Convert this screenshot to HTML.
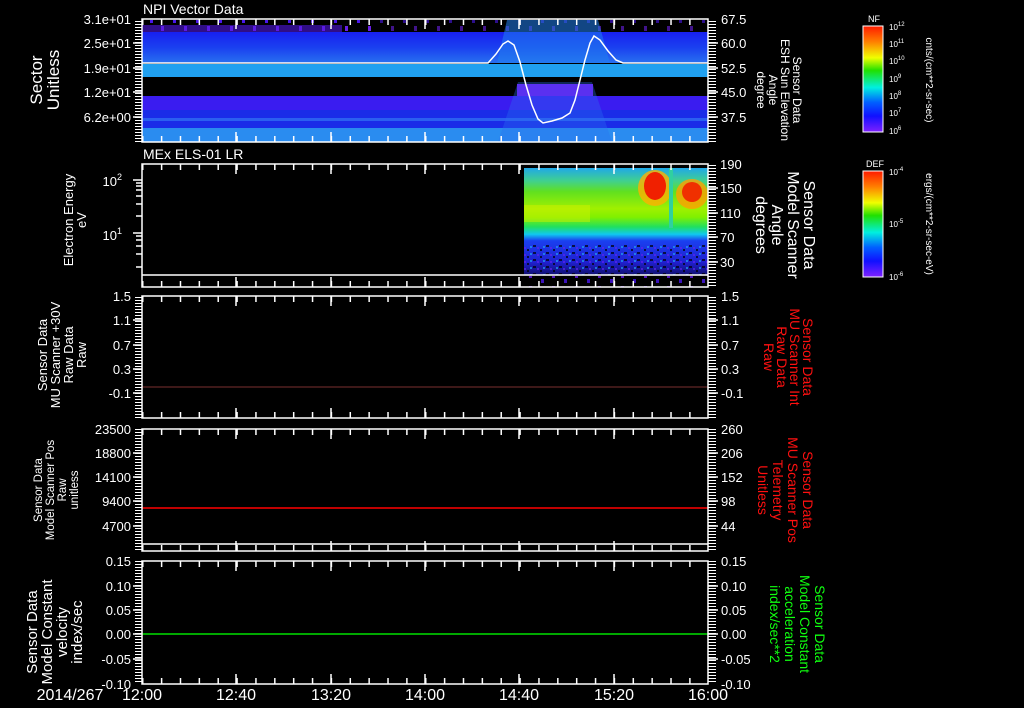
<!DOCTYPE html>
<html><head><meta charset="utf-8"><style>
html,body{margin:0;padding:0;background:#000;width:1024px;height:708px;overflow:hidden}
svg text{font-family:"Liberation Sans",sans-serif;fill:#fff}
</style></head><body>
<svg width="1024" height="708" viewBox="0 0 1024 708" xmlns="http://www.w3.org/2000/svg">
<defs>
<pattern id="yt" x="0" y="0" width="8" height="3" patternUnits="userSpaceOnUse"><rect x="0" y="0" width="8" height="1" fill="#fff"/></pattern>
<pattern id="xt" x="142" y="0" width="18.867" height="10" patternUnits="userSpaceOnUse"><rect x="0" y="0" width="1.5" height="10" fill="#fff"/></pattern>
<linearGradient id="cb" x1="0" y1="0" x2="0" y2="1">
<stop offset="0" stop-color="#ff1a00"/><stop offset="0.15" stop-color="#ff8000"/><stop offset="0.3" stop-color="#f0ff00"/><stop offset="0.42" stop-color="#20e000"/><stop offset="0.58" stop-color="#00f0e0"/><stop offset="0.72" stop-color="#0060ff"/><stop offset="0.85" stop-color="#1010ff"/><stop offset="1" stop-color="#8020ff"/></linearGradient>
<linearGradient id="b1" x1="0" y1="0" x2="0" y2="1"><stop offset="0" stop-color="#1820f0"/><stop offset="0.5" stop-color="#1a40f0"/><stop offset="1" stop-color="#2870f0"/></linearGradient>
<linearGradient id="sp" x1="0" y1="0" x2="0" y2="1">
<stop offset="0" stop-color="#20a8e8"/><stop offset="0.12" stop-color="#40d090"/><stop offset="0.22" stop-color="#60e020"/><stop offset="0.38" stop-color="#a0f000"/><stop offset="0.46" stop-color="#80f000"/><stop offset="0.55" stop-color="#20e060"/><stop offset="0.62" stop-color="#10c8f0"/><stop offset="0.68" stop-color="#1a40f0"/><stop offset="0.88" stop-color="#2020d0"/><stop offset="1" stop-color="#101070"/></linearGradient>
<pattern id="spk" width="13" height="7" patternUnits="userSpaceOnUse"><rect x="0" y="0" width="3" height="2" fill="#000"/><rect x="7" y="4" width="2" height="2" fill="#000"/><rect x="4" y="2" width="2" height="2" fill="#6020f0"/><rect x="10" y="1" width="2" height="2" fill="#20a0f0"/></pattern>
<pattern id="pp" width="23" height="13" patternUnits="userSpaceOnUse"><rect x="0" y="0" width="3" height="5" fill="#6a20e8"/><rect x="12" y="6" width="3" height="4" fill="#4a18e8"/></pattern>
</defs>

<text x="143" y="14" font-size="14">NPI Vector Data</text>
<text x="143" y="159" font-size="14">MEx ELS-01 LR</text>

<!-- PANEL 1 heatmap -->
<rect x="142" y="20" width="230" height="12" fill="url(#pp)"/>
<rect x="142" y="25" width="200" height="7" fill="#5018e0" opacity="0.6"/>
<rect x="372" y="20" width="336" height="12" fill="url(#pp)" opacity="0.6"/>
<rect x="142" y="32" width="566" height="31" fill="url(#b1)"/>
<rect x="142" y="64" width="566" height="13" fill="#20a0f0"/>
<rect x="142" y="96" width="566" height="14" fill="#3a1cf0"/>
<rect x="142" y="110" width="566" height="18" fill="#1a2ce8"/>
<rect x="142" y="118" width="566" height="3" fill="#2a60f0"/>
<rect x="142" y="128" width="566" height="14" fill="#2a8cf0"/>
<polygon points="507,20 598,20 610,63 497,63" fill="#2080f0" opacity="0.55"/>
<polygon points="518,82 592,82 612,142 498,142" fill="#2a70f0" opacity="0.35"/>
<rect x="517" y="84" width="76" height="12" fill="#5a30f0"/>
<polyline fill="none" stroke="#fff" stroke-width="1.5" points="142,63 488,63 496,54 503,44 508,41 514,45 520,62 526,85 532,105 538,119 543,123 552,121 562,118 570,113 575,100 580,80 585,60 590,43 594,36 600,40 608,51 616,60 623,63 708,63"/>
<rect x="142" y="19" width="566" height="123" fill="none" stroke="#fff" stroke-width="1.5"/>
<rect x="142" y="19" width="566" height="6" fill="url(#xt)"/>
<rect x="142" y="136" width="566" height="6" fill="url(#xt)"/>

<!-- PANEL 2 -->
<rect x="524" y="168" width="184" height="107" fill="url(#sp)"/>
<rect x="524" y="205" width="66" height="17" fill="#d8f000" opacity="0.45"/>
<rect x="524" y="245" width="184" height="30" fill="url(#spk)" opacity="0.7"/>
<rect x="524" y="276" width="184" height="11" fill="url(#pp)" opacity="0.8"/>
<ellipse cx="655" cy="188" rx="17" ry="18" fill="#ffb000" opacity="0.8"/>
<ellipse cx="655" cy="186" rx="11" ry="14" fill="#f02000"/>
<ellipse cx="692" cy="194" rx="16" ry="15" fill="#ffa000" opacity="0.8"/>
<ellipse cx="692" cy="192" rx="10" ry="10" fill="#f03000"/>
<rect x="669" y="168" width="4" height="60" fill="#30d0a0"/>
<line x1="142" y1="275" x2="708" y2="275" stroke="#fff" stroke-width="1.5"/>
<rect x="142" y="164" width="566" height="123" fill="none" stroke="#fff" stroke-width="1.5"/>
<rect x="142" y="164" width="566" height="6" fill="url(#xt)"/>
<rect x="142" y="281" width="566" height="6" fill="url(#xt)"/>

<!-- PANEL 3 -->
<line x1="142" y1="387" x2="708" y2="387" stroke="#7a3030" stroke-width="1"/>
<rect x="142" y="296" width="566" height="122" fill="none" stroke="#fff" stroke-width="1.5"/>
<rect x="142" y="296" width="566" height="6" fill="url(#xt)"/>
<rect x="142" y="412" width="566" height="6" fill="url(#xt)"/>

<!-- PANEL 4 -->
<line x1="142" y1="508" x2="708" y2="508" stroke="#ff0000" stroke-width="1.5"/>
<line x1="142" y1="544" x2="708" y2="544" stroke="#fff" stroke-width="1.5"/>
<rect x="142" y="429" width="566" height="122" fill="none" stroke="#fff" stroke-width="1.5"/>
<rect x="142" y="429" width="566" height="6" fill="url(#xt)"/>
<rect x="142" y="545" width="566" height="6" fill="url(#xt)"/>

<!-- PANEL 5 -->
<line x1="142" y1="634" x2="708" y2="634" stroke="#00e000" stroke-width="1.5"/>
<rect x="142" y="561" width="566" height="123" fill="none" stroke="#fff" stroke-width="1.5"/>
<rect x="142" y="561" width="566" height="6" fill="url(#xt)"/>
<rect x="142" y="678" width="566" height="6" fill="url(#xt)"/>

<g stroke="#fff" stroke-width="1.5">
<path d="M236 19v10M331 19v10M425 19v10M519 19v10M614 19v10M236 142v-10M331 142v-10M425 142v-10M519 142v-10M614 142v-10
M236 164v10M331 164v10M425 164v10M519 164v10M614 164v10M236 287v-10M331 287v-10M425 287v-10M519 287v-10M614 287v-10
M236 296v10M331 296v10M425 296v10M519 296v10M614 296v10M236 418v-10M331 418v-10M425 418v-10M519 418v-10M614 418v-10
M236 429v10M331 429v10M425 429v10M519 429v10M614 429v10M236 551v-10M331 551v-10M425 551v-10M519 551v-10M614 551v-10
M236 561v10M331 561v10M425 561v10M519 561v10M614 561v10M236 684v-10M331 684v-10M425 684v-10M519 684v-10M614 684v-10"/>
</g>

<g fill="url(#yt)">
<rect x="135" y="19" width="7" height="123"/><rect x="708" y="19" width="8" height="123"/>
<rect x="135" y="296" width="7" height="122"/><rect x="708" y="296" width="8" height="122"/>
<rect x="135" y="429" width="7" height="122"/><rect x="708" y="429" width="8" height="122"/>
<rect x="135" y="561" width="7" height="123"/><rect x="708" y="561" width="8" height="123"/>
<rect x="708" y="164" width="8" height="123"/>
</g>
<g stroke="#fff" stroke-width="1.5">
<path d="M133 43h9M133 68h9M133 92h9M133 117h9M708 43h10M708 68h10M708 92h10M708 117h10
M133 180h9M133 233h9M708 188h10M708 213h10M708 237h10M708 262h10
M136 183h6M136 186h6M136 190h6M136 196h6M136 204h6M136 216h6M136 236h6M136 240h6M136 246h6M136 254h6M136 267h6
M133 320h9M133 345h9M133 369h9M133 393h9M708 320h10M708 345h10M708 369h10M708 393h10
M133 453h9M133 477h9M133 501h9M133 526h9M708 453h10M708 477h10M708 501h10M708 526h10
M133 586h9M133 610h9M133 634h9M133 659h9M708 586h10M708 610h10M708 634h10M708 659h10"/>
</g>

<g font-size="13" text-anchor="end">
<text x="131" y="24">3.1e+01</text><text x="131" y="48">2.5e+01</text><text x="131" y="73">1.9e+01</text><text x="131" y="97">1.2e+01</text><text x="131" y="122">6.2e+00</text>
<text x="122" y="186">10<tspan dy="-6" font-size="9">2</tspan></text><text x="122" y="240">10<tspan dy="-6" font-size="9">1</tspan></text>
<text x="131" y="301">1.5</text><text x="131" y="325">1.1</text><text x="131" y="350">0.7</text><text x="131" y="374">0.3</text><text x="131" y="398">-0.1</text>
<text x="131" y="434">23500</text><text x="131" y="458">18800</text><text x="131" y="482">14100</text><text x="131" y="506">9400</text><text x="131" y="531">4700</text>
<text x="131" y="566">0.15</text><text x="131" y="591">0.10</text><text x="131" y="615">0.05</text><text x="131" y="639">0.00</text><text x="131" y="664">-0.05</text><text x="131" y="689">-0.10</text>
</g>
<g font-size="13">
<text x="721" y="24">67.5</text><text x="721" y="48">60.0</text><text x="721" y="73">52.5</text><text x="721" y="97">45.0</text><text x="721" y="122">37.5</text>
<text x="720" y="169">190</text><text x="720" y="193">150</text><text x="720" y="218">110</text><text x="720" y="242">70</text><text x="720" y="267">30</text>
<text x="721" y="301">1.5</text><text x="721" y="325">1.1</text><text x="721" y="350">0.7</text><text x="721" y="374">0.3</text><text x="721" y="398">-0.1</text>
<text x="721" y="434">260</text><text x="721" y="458">206</text><text x="721" y="482">152</text><text x="721" y="506">98</text><text x="721" y="531">44</text>
<text x="721" y="566">0.15</text><text x="721" y="591">0.10</text><text x="721" y="615">0.05</text><text x="721" y="639">0.00</text><text x="721" y="664">-0.05</text><text x="721" y="689">-0.10</text>
</g>

<g font-size="16" text-anchor="middle">
<text x="70" y="700">2014/267</text>
<text x="142" y="700">12:00</text><text x="236" y="700">12:40</text><text x="331" y="700">13:20</text><text x="425" y="700">14:00</text><text x="519" y="700">14:40</text><text x="614" y="700">15:20</text><text x="708" y="700">16:00</text>
</g>

<g text-anchor="middle">
<text transform="translate(42,80) rotate(-90)" font-size="17">Sector<tspan x="0" dy="17">Unitless</tspan></text>
<text transform="translate(73,220) rotate(-90)" font-size="13">Electron Energy<tspan x="0" dy="13">eV</tspan></text>
<text transform="translate(47,355) rotate(-90)" font-size="13">Sensor Data<tspan x="0" dy="13">MU Scanner +30V</tspan><tspan x="0" dy="13">Raw Data</tspan><tspan x="0" dy="13">Raw</tspan></text>
<text transform="translate(42,490) rotate(-90)" font-size="11.5">Sensor Data<tspan x="0" dy="12">Model Scanner Pos</tspan><tspan x="0" dy="12">Raw</tspan><tspan x="0" dy="12">unitless</tspan></text>
<text transform="translate(37,632) rotate(-90)" font-size="15">Sensor Data<tspan x="0" dy="15">Model Constant</tspan><tspan x="0" dy="15">velocity</tspan><tspan x="0" dy="15">index/sec</tspan></text>
</g>
<g text-anchor="middle">
<text transform="translate(793,90) rotate(90)" font-size="12">Sensor Data<tspan x="0" dy="12">ESH Sun Elevation</tspan><tspan x="0" dy="12">Angle</tspan><tspan x="0" dy="12">degree</tspan></text>
<text transform="translate(804,225) rotate(90)" font-size="16">Sensor Data<tspan x="0" dy="16">Model Scanner</tspan><tspan x="0" dy="16">Angle</tspan><tspan x="0" dy="16">degrees</tspan></text>
<text transform="translate(803,357) rotate(90)" font-size="14" style="fill:#ff1010">Sensor Data<tspan x="0" dy="13">MU Scanner Int</tspan><tspan x="0" dy="13">Raw Data</tspan><tspan x="0" dy="13">Raw</tspan></text>
<text transform="translate(803,490) rotate(90)" font-size="14" style="fill:#ff1010">Sensor Data<tspan x="0" dy="15">MU Scanner Pos</tspan><tspan x="0" dy="15">Telemetry</tspan><tspan x="0" dy="15">Unitless</tspan></text>
<text transform="translate(815,624) rotate(90)" font-size="14" style="fill:#10ff10">Sensor Data<tspan x="0" dy="15">Model Constant</tspan><tspan x="0" dy="15">acceleration</tspan><tspan x="0" dy="15">index/sec**2</tspan></text>
</g>

<rect x="863" y="26" width="20" height="106" fill="url(#cb)" stroke="#fff" stroke-width="1"/>
<rect x="863" y="171" width="20" height="106" fill="url(#cb)" stroke="#fff" stroke-width="1"/>
<text x="868" y="22" font-size="9">NF</text>
<text x="866" y="167" font-size="9">DEF</text>
<g font-size="8">
<text x="889" y="30">10<tspan dy="-4" font-size="6">12</tspan></text><text x="889" y="47">10<tspan dy="-4" font-size="6">11</tspan></text><text x="889" y="64">10<tspan dy="-4" font-size="6">10</tspan></text><text x="889" y="82">10<tspan dy="-4" font-size="6">9</tspan></text><text x="889" y="99">10<tspan dy="-4" font-size="6">8</tspan></text><text x="889" y="116">10<tspan dy="-4" font-size="6">7</tspan></text><text x="889" y="134">10<tspan dy="-4" font-size="6">6</tspan></text>
<text x="889" y="175">10<tspan dy="-4" font-size="6">-4</tspan></text><text x="889" y="227">10<tspan dy="-4" font-size="6">-5</tspan></text><text x="889" y="280">10<tspan dy="-4" font-size="6">-6</tspan></text>
</g>
<g font-size="10" text-anchor="middle">
<text transform="translate(926,80) rotate(90)">cnts/(cm**2-sr-sec)</text>
<text transform="translate(926,224) rotate(90)">ergs/(cm**2-sr-sec-eV)</text>
</g>
</svg>
</body></html>
